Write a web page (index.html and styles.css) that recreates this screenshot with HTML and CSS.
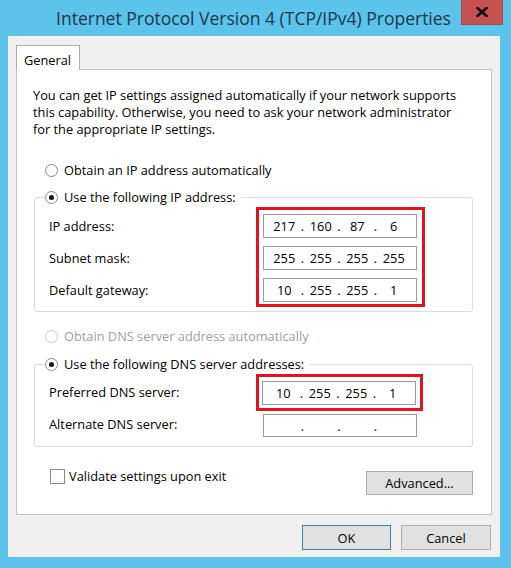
FILE: index.html
```html
<!DOCTYPE html>
<html lang="en">
<head>
    <meta charset="UTF-8">
    <title>Internet Protocol Version 4 (TCP/IPv4) Properties</title>
    <link rel="stylesheet" href="styles.css">
</head>
<body>

<div class="window">
    <!-- Barra de título -->
    <div class="titlebar">
        <span></span>
        <span class="title">Internet Protocol Version 4 (TCP/IPv4) Properties</span>
        <span class="close">
            <svg width="12" height="10" viewBox="0 0 12 10">
                <path d="M1.5 1 L10.5 9 M10.5 1 L1.5 9" stroke="#111" stroke-width="2.6" stroke-linecap="square"/>
            </svg>
        </span>
    </div>

    <div class="client">
        <div class="tabs">
            <div class="tab">General</div>
        </div>

        <div class="panel">
            <p class="intro">You can get IP settings assigned automatically if your network supports<br>
            this capability. Otherwise, you need to ask your network administrator<br>
            for the appropriate IP settings.</p>

            <div class="option first">
                <span class="radio"></span>Obtain an IP address automatically
            </div>

            <fieldset class="group">
                <legend class="option"><span class="radio checked"></span>Use the following IP address:</legend>
                <div class="group-body">
                    <div class="labels">
                        <div class="label">IP address:</div>
                        <div class="label">Subnet mask:</div>
                        <div class="label">Default gateway:</div>
                    </div>
                    <div class="highlight">
                        <div class="ip"><span>217</span><i>.</i><span>160</span><i>.</i><span>87</span><i>.</i><span>6</span></div>
                        <div class="ip"><span>255</span><i>.</i><span>255</span><i>.</i><span>255</span><i>.</i><span>255</span></div>
                        <div class="ip"><span>10</span><i>.</i><span>255</span><i>.</i><span>255</span><i>.</i><span>1</span></div>
                    </div>
                </div>
            </fieldset>

            <div class="option disabled">
                <span class="radio"></span>Obtain DNS server address automatically
            </div>

            <fieldset class="group dns">
                <legend class="option"><span class="radio checked"></span>Use the following DNS server addresses:</legend>
                <div class="row">
                    <div class="label">Preferred DNS server:</div>
                    <div class="highlight">
                        <div class="ip"><span>10</span><i>.</i><span>255</span><i>.</i><span>255</span><i>.</i><span>1</span></div>
                    </div>
                </div>
                <div class="row">
                    <div class="label">Alternate DNS server:</div>
                    <div class="ip plain"><span></span><i>.</i><span></span><i>.</i><span></span><i>.</i><span></span></div>
                </div>
            </fieldset>

            <div class="bottom-row">
                <label class="check"><span class="checkbox"></span>Validate settings upon exit</label>
                <button class="btn advanced">Advanced...</button>
            </div>
        </div>

        <div class="footer">
            <button class="btn default">OK</button>
            <button class="btn">Cancel</button>
        </div>
    </div>
</div>

</body>
</html>
```

FILE: styles.css
```css
body {
    margin: 0;
    font-family: "Open Sans", "Noto Sans", sans-serif;
    font-size: 12.8px;
    color: #000;
}
.window {
    width: 511px;
    height: 568px;
    background-color: #5cc4ea;
    display: flex;
    flex-direction: column;
}
/* Barra de título */
.titlebar {
    height: 36px;
    display: grid;
    grid-template-columns: 52px 1fr 52px;
}
.title {
    text-align: center;
    font-size: 17.5px;
    color: #1c3550;
    line-height: 36px;
    padding-right: 4px;
}
.close {
    justify-self: end;
    margin-right: 8px;
    width: 42px;
    height: 25px;
    background-color: #c75050;
    box-sizing: border-box;
    border: 1px solid #b04545;
    border-top: none;
    display: flex;
    align-items: center;
    justify-content: center;
}
.client {
    flex: 1;
    margin: 0 11px 11px 8px;
    background-color: #f0f0f0;
    padding: 9px 8px 0 8px;
}
/* Pestaña */
.tabs {
    display: flex;
}
.tab {
    width: 64px;
    height: 25px;
    box-sizing: border-box;
    border: 1px solid #adadad;
    border-bottom: none;
    background-color: #fff;
    padding: 5px 0 0 7px;
    margin-bottom: -1px;
    position: relative;
    z-index: 1;
}
.panel {
    background-color: #fff;
    border: 1px solid #c4c4c4;
    padding: 17px 17px 19px 16px;
}
.intro {
    margin: 0;
    line-height: 17px;
}
/* Opciones (radio) */
.option {
    display: flex;
    align-items: center;
    line-height: 16px;
    padding-left: 12px;
    gap: 6px;
}
.option.first {
    margin-top: 24px;
}
.option.disabled {
    color: #a0a0a0;
    margin-top: 16px;
}
.radio {
    width: 13px;
    height: 13px;
    box-sizing: border-box;
    border: 1px solid #8a8a8a;
    border-radius: 50%;
    background-color: #fff;
    display: flex;
    align-items: center;
    justify-content: center;
}
.radio.checked::after {
    content: "";
    width: 5px;
    height: 5px;
    border-radius: 50%;
    background-color: #111;
}
.disabled .radio {
    border-color: #c8c8c8;
}
/* Grupos */
.group {
    margin: 11px 1px 0 1px;
    padding: 0 0 4px 14px;
    border: 1px solid #dcdcdc;
    border-radius: 3px;
}
.group legend.option {
    padding: 0 5px 0 0;
    margin-left: -4px;
    gap: 6px;
}
.group-body {
    display: flex;
    padding-top: 2px;
}
.labels {
    flex: 1;
    display: flex;
    flex-direction: column;
    gap: 8px;
    padding-top: 7px;
}
.label {
    height: 24px;
    line-height: 24px;
}
.highlight {
    display: flex;
    flex-direction: column;
    gap: 8px;
    border: 3px solid #e2131c;
    padding: 4px 5px 2px 4px;
    margin-right: 47px;
}
/* Campo de dirección IP */
.ip {
    width: 154px;
    height: 24px;
    box-sizing: border-box;
    border: 1px solid #9a9a9a;
    background-color: #fff;
    display: grid;
    grid-template-columns: 1fr 8px 1fr 8px 1fr 8px 1fr;
    padding: 0 8px 0 6px;
    line-height: 22px;
    text-align: center;
}
.ip i {
    font-style: normal;
}
.group.dns {
    margin-top: 12px;
    padding-bottom: 9px;
}
.row {
    display: flex;
    align-items: center;
}
.row .label {
    flex: 1;
}
.dns .highlight {
    margin-top: 2px;
    padding: 4px 4px 3px 3px;
    margin-right: 49px;
}
.ip.plain {
    margin: 3px 55px 0 6px;
    height: 23px;
}
/* Casilla y botones */
.bottom-row {
    display: flex;
    justify-content: space-between;
    align-items: flex-start;
    margin-top: 21px;
    padding-left: 17px;
}
.check {
    display: flex;
    align-items: center;
    line-height: 16px;
    gap: 4px;
}
.checkbox {
    width: 15px;
    height: 15px;
    box-sizing: border-box;
    border: 1px solid #8a8a8a;
    background-color: #fff;
}
.btn {
    font-family: inherit;
    font-size: 12.8px;
    height: 25px;
    background-color: #e1e1e1;
    border: 1px solid #adadad;
    color: #000;
    padding: 0;
}
.advanced {
    width: 107px;
    height: 24px;
    margin-top: 3px;
    margin-right: 1px;
}
.footer {
    display: flex;
    justify-content: flex-end;
    gap: 10px;
    margin-top: 10px;
    padding-right: 1px;
}
.footer .btn {
    width: 90px;
}
.btn.default {
    border-color: #3c7fb1;
    width: 89px;
}
```
